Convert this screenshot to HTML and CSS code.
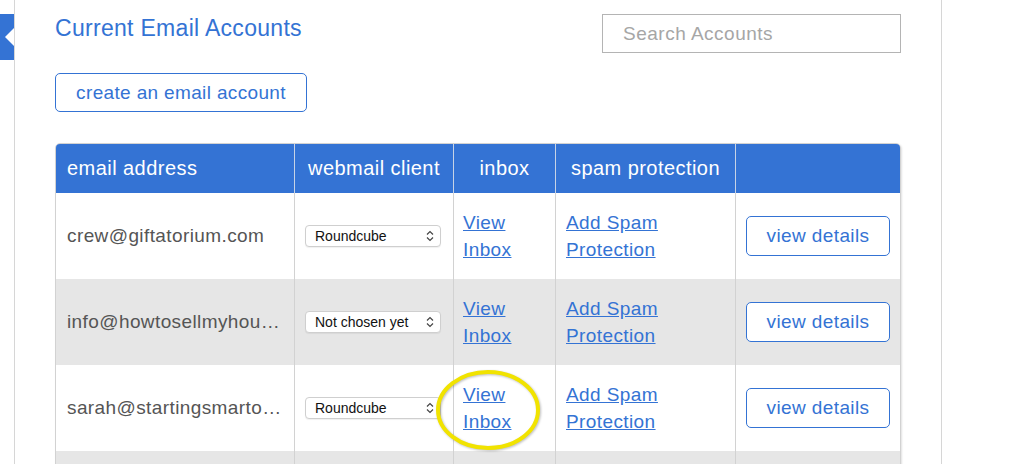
FILE: index.html
```html
<!DOCTYPE html>
<html lang="en">
<head>
<meta charset="utf-8">
<title>Current Email Accounts</title>
<link rel="stylesheet" href="styles.css">
</head>
<body>
<div class="page">
  <aside class="rail">
    <div class="rail-tab"></div>
  </aside>
  <main class="main">
    <div class="topbar">
      <div class="intro">
        <h1 class="title">Current Email Accounts</h1>
        <button class="btn btn-create" type="button">create an email account</button>
      </div>
      <input class="search" type="text" placeholder="Search Accounts">
    </div>

    <div class="accounts">
      <div class="row row-head">
        <div class="cell head head-left">email address</div>
        <div class="cell head">webmail client</div>
        <div class="cell head">inbox</div>
        <div class="cell head">spam protection</div>
        <div class="cell head"></div>
      </div>

      <div class="row row-white">
        <div class="cell email"><span class="email-text">crew@giftatorium.com</span></div>
        <div class="cell client">
          <div class="select"><span class="select-label">Roundcube</span><svg class="caret" viewBox="0 0 8 12" width="8" height="12"><path d="M1 4.5 4 1.5 7 4.5M1 7.5 4 10.5 7 7.5" fill="none" stroke="#444" stroke-width="1.2"/></svg></div>
        </div>
        <div class="cell links"><a href="#">View<br>Inbox</a></div>
        <div class="cell links spam"><a href="#">Add Spam<br>Protection</a></div>
        <div class="cell action"><button class="btn btn-details" type="button">view details</button></div>
      </div>

      <div class="row row-gray">
        <div class="cell email"><span class="email-text">info@howtosellmyhouse.com</span></div>
        <div class="cell client">
          <div class="select"><span class="select-label">Not chosen yet</span><svg class="caret" viewBox="0 0 8 12" width="8" height="12"><path d="M1 4.5 4 1.5 7 4.5M1 7.5 4 10.5 7 7.5" fill="none" stroke="#444" stroke-width="1.2"/></svg></div>
        </div>
        <div class="cell links"><a href="#">View<br>Inbox</a></div>
        <div class="cell links spam"><a href="#">Add Spam<br>Protection</a></div>
        <div class="cell action"><button class="btn btn-details" type="button">view details</button></div>
      </div>

      <div class="row row-white">
        <div class="cell email"><span class="email-text">sarah@startingsmartonline.com</span></div>
        <div class="cell client">
          <div class="select"><span class="select-label">Roundcube</span><svg class="caret" viewBox="0 0 8 12" width="8" height="12"><path d="M1 4.5 4 1.5 7 4.5M1 7.5 4 10.5 7 7.5" fill="none" stroke="#444" stroke-width="1.2"/></svg></div>
        </div>
        <div class="cell links highlight">
          <a href="#">View<br>Inbox</a>
          <svg class="circle" viewBox="0 0 106 82" width="106" height="82"><ellipse cx="53" cy="41" rx="50" ry="38" fill="none" stroke="#f1e300" stroke-width="4"/></svg>
        </div>
        <div class="cell links spam"><a href="#">Add Spam<br>Protection</a></div>
        <div class="cell action"><button class="btn btn-details" type="button">view details</button></div>
      </div>

      <div class="row row-gray">
        <div class="cell"></div>
        <div class="cell"></div>
        <div class="cell"></div>
        <div class="cell"></div>
        <div class="cell"></div>
      </div>
    </div>
  </main>
</div>
</body>
</html>
```

FILE: styles.css
```css
html, body {
  margin: 0;
  padding: 0;
  height: 464px;
  overflow: hidden;
  background: #ffffff;
}

body {
  font-family: "Liberation Sans", Arial, sans-serif;
  color: #555555;
}

.page {
  display: flex;
  height: 464px;
}

.rail {
  width: 14px;
  border-right: 1px solid #d6d6d6;
  flex: none;
}

.rail-tab {
  position: relative;
  margin-top: 14px;
  width: 14px;
  height: 46px;
  background: #3473d4;
}

.rail-tab::after {
  content: "";
  position: absolute;
  right: 0;
  top: 14px;
  border-style: solid;
  border-width: 9px 9px 9px 0;
  border-color: transparent #ffffff transparent transparent;
}

.main {
  width: 846px;
  padding: 0 40px;
  border-right: 1px solid #d6d6d6;
  flex: none;
}

.topbar {
  display: flex;
  justify-content: space-between;
  align-items: flex-start;
}

.intro {
  display: flex;
  flex-direction: column;
  align-items: flex-start;
}

.title {
  margin: 15px 0 0;
  font-size: 23px;
  line-height: 26px;
  letter-spacing: 0.3px;
  font-weight: normal;
  color: #3473d4;
}

.btn {
  font-family: "Liberation Sans", Arial, sans-serif;
  font-size: 19px;
  letter-spacing: 0.4px;
  color: #3473d4;
  background: #ffffff;
  border: 1px solid #3473d4;
  border-radius: 5px;
  padding: 0;
  cursor: pointer;
}

.btn-create {
  margin-top: 32px;
  width: 252px;
  height: 39px;
  letter-spacing: 0.35px;
}

.search {
  margin-top: 14px;
  width: 299px;
  height: 39px;
  box-sizing: border-box;
  border: 1px solid #b4b4b4;
  padding: 0 0 0 20px;
  font-family: "Liberation Sans", Arial, sans-serif;
  font-size: 19px;
  letter-spacing: 0.5px;
  color: #333333;
  outline: none;
}

.search::placeholder {
  color: #a6a6a6;
}

.accounts {
  margin-top: 31px;
  border: 1px solid #d2d2d2;
  border-radius: 5px 5px 0 0;
  overflow: hidden;
  box-shadow: 1px 1px 2px rgba(0, 0, 0, 0.12);
}

.row {
  display: grid;
  grid-template-columns: 238px 158px 101px 179px 164px;
  column-gap: 1px;
  background: #d2d2d2;
}

.row-head {
  height: 49px;
  background: #c7d3e6;
}

.cell {
  display: flex;
  align-items: center;
  min-width: 0;
  box-sizing: border-box;
}

.head {
  background: #3473d4;
  color: #ffffff;
  font-size: 20px;
  letter-spacing: 0.45px;
  justify-content: center;
}

.head-left {
  justify-content: flex-start;
  padding-left: 11px;
}

.row-white,
.row-gray {
  height: 86px;
}

.row-white .cell {
  background: #ffffff;
}

.row-gray .cell {
  background: #e6e6e6;
}

.email {
  padding: 0 12px 0 11px;
  font-size: 19px;
  letter-spacing: 0.4px;
  color: #555555;
}

.email-text {
  display: block;
  overflow: hidden;
  white-space: nowrap;
  text-overflow: ellipsis;
}

.client {
  padding-left: 10px;
}

.select {
  display: flex;
  align-items: center;
  gap: 4px;
  box-sizing: border-box;
  width: 136px;
  height: 22px;
  padding: 0 6px 0 9px;
  background: #ffffff;
  border: 1px solid #cfcfcf;
  border-radius: 4px;
  box-shadow: 0 1px 1px rgba(0, 0, 0, 0.06);
  font-family: "Liberation Sans", Arial, sans-serif;
  font-size: 14px;
  line-height: 16px;
  color: #111111;
}

.select-label {
  flex: 1;
  min-width: 0;
  white-space: nowrap;
}

.caret {
  flex: none;
}

.links {
  padding-left: 9px;
  font-size: 19px;
  letter-spacing: 0.4px;
  line-height: 27px;
}

.links a {
  color: #3473d4;
  text-decoration: underline;
}

.spam {
  padding-left: 10px;
}

.highlight {
  position: relative;
}

.circle {
  position: absolute;
  left: -19px;
  top: 4px;
  filter: drop-shadow(1px 1px 1px rgba(0, 0, 0, 0.25));
}

.action {
  padding-left: 10px;
}

.btn-details {
  width: 144px;
  height: 40px;
}
```
